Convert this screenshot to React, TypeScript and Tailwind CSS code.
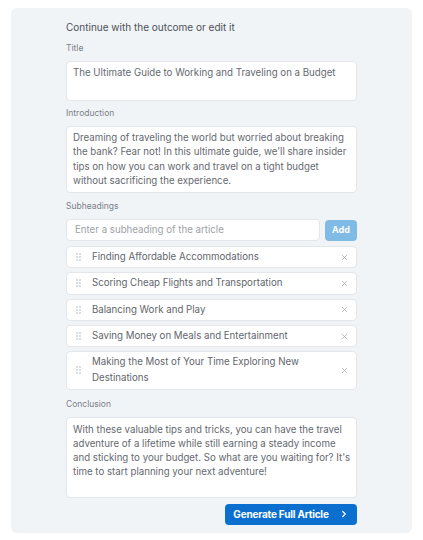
import { ChevronRight, X } from "lucide-react";

const subheadings = [
  "Finding Affordable Accommodations",
  "Scoring Cheap Flights and Transportation",
  "Balancing Work and Play",
  "Saving Money on Meals and Entertainment",
  "Making the Most of Your Time Exploring New Destinations",
];

// six-dot drag handle
function Grip() {
  return (
    <svg width="5" height="8" viewBox="0 0 5 8" className="shrink-0 text-gray-400">
      {[1, 4, 7].map((y) => (
        <g key={y}>
          <circle cx="1" cy={y} r="0.7" fill="currentColor" />
          <circle cx="4" cy={y} r="0.7" fill="currentColor" />
        </g>
      ))}
    </svg>
  );
}

function Label({ children }: { children: React.ReactNode }) {
  return <p className="h-[13px] leading-[13px] text-[8.5px] text-[#7a7f87] mb-[6px]">{children}</p>;
}

export default function App() {
  return (
    <div className="w-[423px] h-[540px] bg-white pt-[8px] px-[11px]" style={{ fontFamily: "Inter, 'Noto Sans', sans-serif" }}>
      <div className="bg-[#f1f4f7] rounded-md h-[525px] pt-[12px] pl-[55px] pr-[55px]">
        {/* Header */}
        <h2 className="text-[10px] text-[#4b5058] leading-[14px] mb-[8px]">Continue with the outcome or edit it</h2>

        <Label>Title</Label>
        <div className="bg-white border border-[#e3e6ea] rounded-[4px] h-[40px] px-[6px] pt-[4px] text-[9.7px] leading-[14.5px] text-[#65696f] mb-[6px]">
          The Ultimate Guide to Working and Traveling on a Budget
        </div>

        <Label>Introduction</Label>
        <div className="bg-white border border-[#e3e6ea] rounded-[4px] h-[67px] px-[6px] pt-[4px] text-[9.7px] leading-[14.3px] text-[#65696f] mb-[7px]">
          Dreaming of traveling the world but worried about breaking the bank? Fear not! In this ultimate guide, we'll share insider tips on how you can work and travel on a tight budget without sacrificing the experience.
        </div>

        <Label>Subheadings</Label>
        <div className="flex items-center gap-[5px] mb-[5px]">
          <div className="flex-1 h-[22px] bg-white border border-[#e3e6ea] rounded-[4px] px-[8px] flex items-center text-[9.7px] text-[#9da1a7]">
            Enter a subheading of the article
          </div>
          <button className="w-[32px] h-[21px] rounded-[4px] bg-[#80bbe6] text-white text-[9px] font-bold">Add</button>
        </div>

        <div className="flex flex-col gap-[4px] mb-[8px]">
          {subheadings.map((s) => (
            <div key={s} className="bg-white border border-[#e3e6ea] rounded-[4px] flex items-center pl-[9px] pr-[7px] py-[2px]">
              <Grip />
              <span className="flex-1 pl-[11px] pr-[20px] text-[9.7px] leading-[16.3px] text-[#62666c]">{s}</span>
              <X className="w-[9px] h-[9px] text-[#9a9ea4]" strokeWidth={1.7} />
            </div>
          ))}
        </div>

        <Label>Conclusion</Label>
        <div className="bg-white border border-[#e3e6ea] rounded-[4px] h-[81px] pl-[6px] pr-[3px] pt-[5px] text-[9.7px] leading-[14px] text-[#65696f] mb-[6px]">
          With these valuable tips and tricks, you can have the travel adventure of a lifetime while still earning a steady income and sticking to your budget. So what are you waiting for? It's time to start planning your next adventure!
        </div>

        <div className="flex justify-end">
          <button className="w-[132px] h-[21px] rounded-[4px] bg-[#0a6fcf] text-white text-[10px] font-bold flex items-center justify-center gap-[10px] tracking-[-0.2px]">
            Generate Full Article
            <ChevronRight className="w-[10px] h-[10px]" strokeWidth={3} />
          </button>
        </div>
      </div>
    </div>
  );
}
